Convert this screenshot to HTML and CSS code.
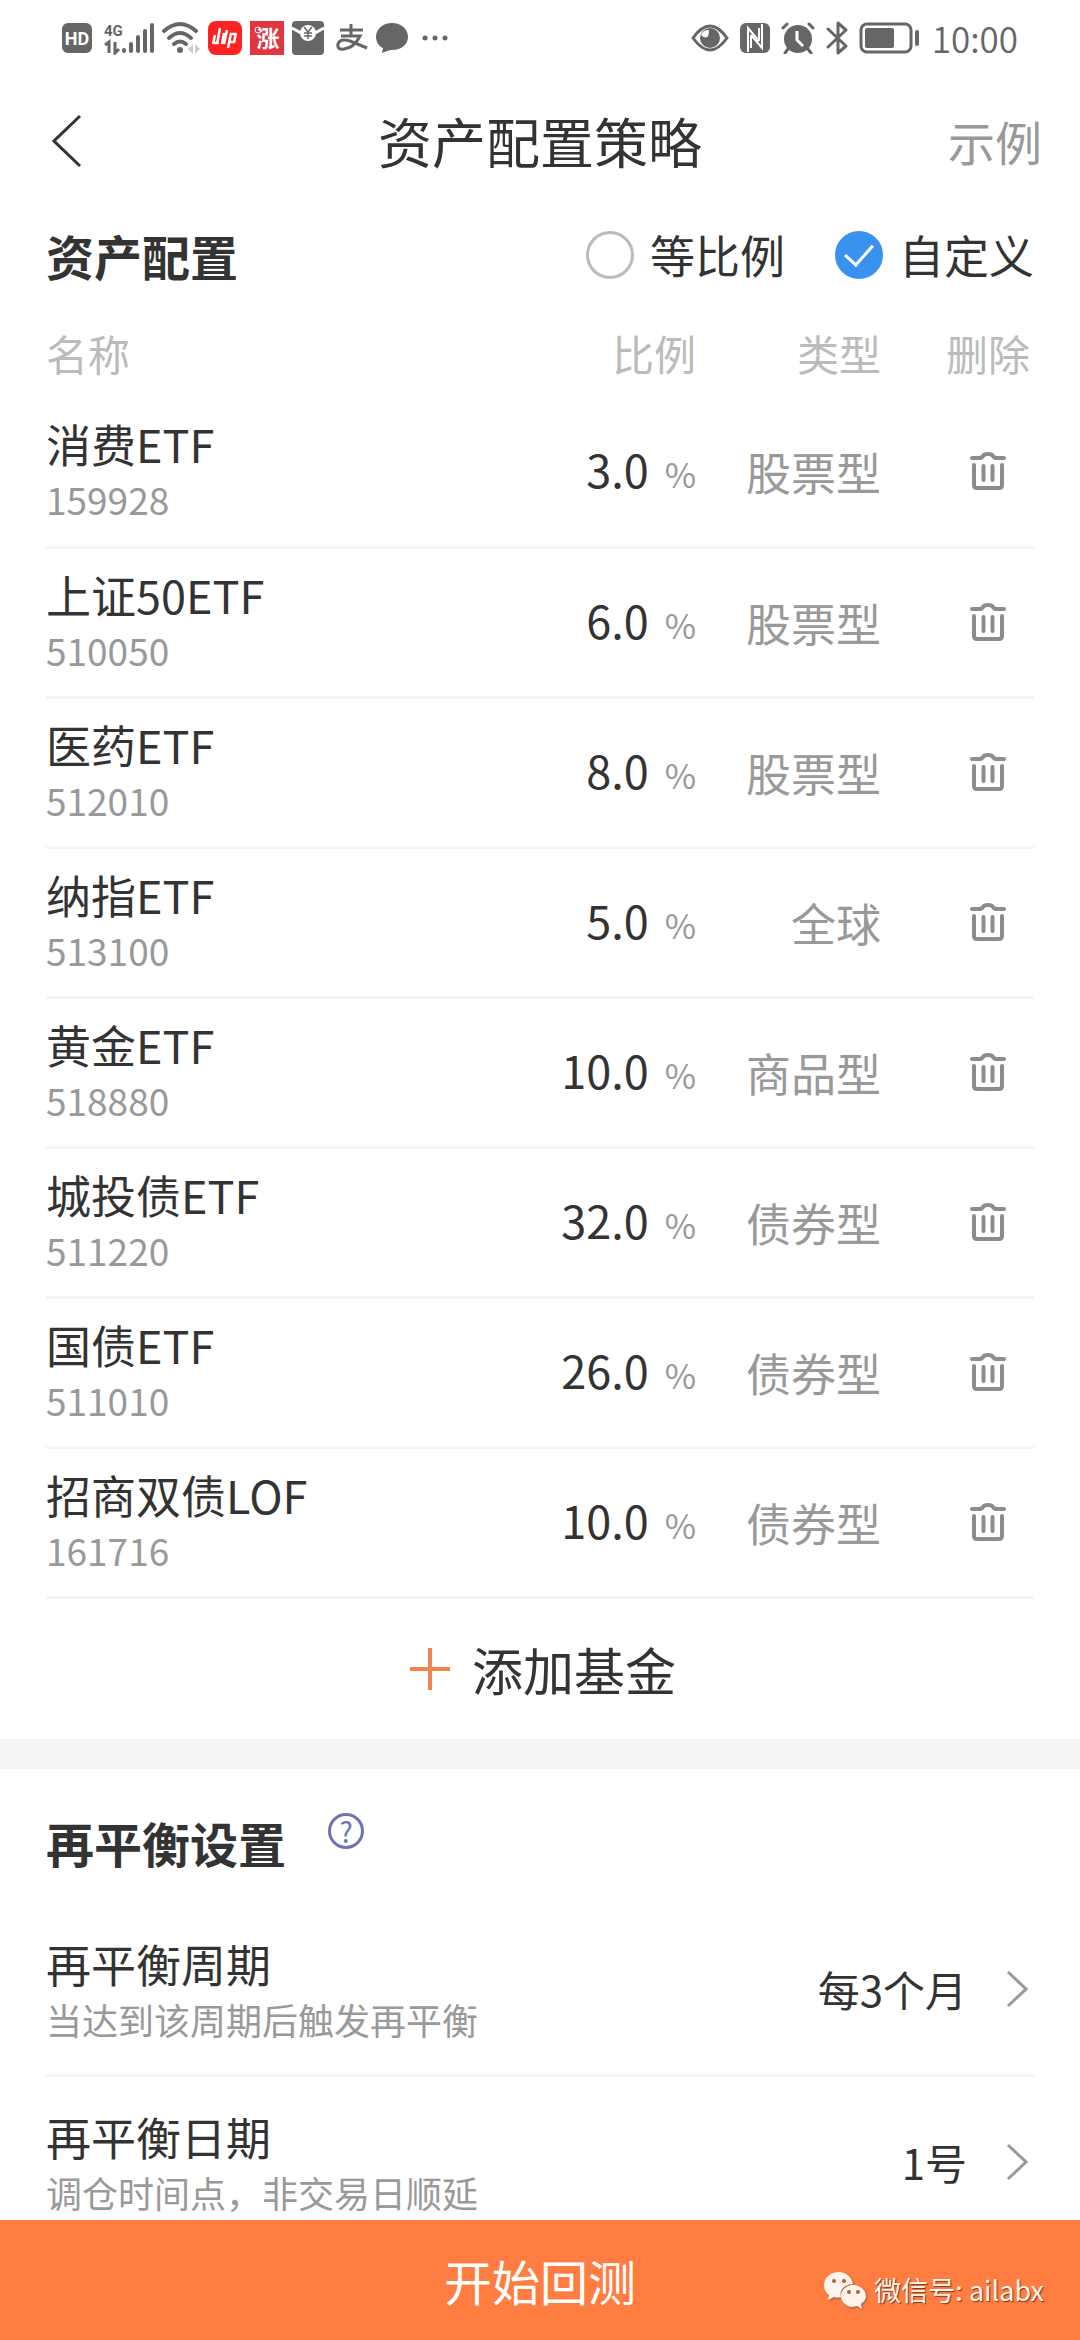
FILE: index.html
```html
<!DOCTYPE html>
<html lang="zh-CN">
<head>
<meta charset="utf-8">
<meta name="viewport" content="width=device-width, initial-scale=1">
<title>资产配置策略</title>
<link rel="stylesheet" href="styles.css">
</head>
<body>
<svg class="sprite" aria-hidden="true">
  <symbol id="trash" viewBox="0 0 36 38">
    <g fill="none" stroke="currentColor" stroke-width="4" stroke-linecap="round" stroke-linejoin="round">
      <path d="M2 6H9Q12 6 13 4Q14 2 18 2T23 4Q24 6 27 6H34"/>
      <path d="M4 13V33Q4 36 7 36H29Q32 36 32 33V13"/>
      <path d="M13.500 14V28M22.500 14V28"/>
    </g>
  </symbol>
  <symbol id="chevron" viewBox="0 0 22 38">
    <path d="M2 2L20 19L2 36" fill="none" stroke="currentColor" stroke-width="3"/>
  </symbol>
</svg>

<div class="status">
  <div class="status-left">
    <svg width="30" height="30" viewBox="0 0 30 30"><rect width="30" height="30" rx="6" fill="#666"/><text x="15" y="22" text-anchor="middle" class="t-hd">HD</text></svg>
    <svg class="gap-s" width="50" height="34" viewBox="0 0 50 34"><text x="0" y="15" class="t-4g">4G</text><path d="M1 24L5 21V32M11 21V32L15 28" fill="none" stroke="#666" stroke-width="3"/><path d="M20 29V30M27 23V30M34 16V30M41 10V30M48 4V30" stroke="#666" stroke-width="4" stroke-linecap="round"/></svg>
    <svg width="38" height="34" viewBox="0 0 38 34"><g fill="none" stroke="#666" stroke-width="4" stroke-linecap="round"><path d="M2 10Q18 -4 34 10"/><path d="M7 17Q18 7 29 17"/><path d="M12 23Q18 18 24 23"/></g><circle cx="18" cy="29" r="3" fill="#666"/><path d="M26 28L31 23V33ZM33 23V33L38 28Z" fill="#ccc"/></svg>
    <svg width="34" height="34" viewBox="0 0 34 34"><rect width="34" height="34" rx="8" fill="#f22"/><path d="M7 14L5 23M12 7L9 23M16 12L14 23M19 9L16 23M23 12L20 27M28 12L26 22M5 22H11M22 13H28M22 21H27" stroke="#fff" stroke-width="2.500" fill="none"/></svg>
    <svg width="34" height="34" viewBox="0 0 34 34"><rect width="34" height="34" fill="#e0363f"/><text x="18" y="26" text-anchor="middle" class="t-zhang">涨</text><circle cx="8" cy="9" r="3" fill="none" stroke="#fff"/></svg>
    <svg width="32" height="34" viewBox="0 0 32 34"><rect width="32" height="34" rx="4" fill="#666"/><path d="M0 7L9 12M32 7L23 12" stroke="#fff" stroke-width="3"/><circle cx="16" cy="12" r="8" fill="#fff"/><path d="M12 6L16 11L20 6M16 11V18M12 12H20M12 15H20" fill="none" stroke="#666" stroke-width="1.500"/></svg>
    <svg class="gap-s" width="32" height="28" viewBox="0 0 32 28"><path d="M4 6H27M15 0V12M5 12H24Q18 24 8 25Q1 26 2 20Q4 14 14 17L31 24" fill="none" stroke="#666" stroke-width="3"/></svg>
    <svg width="32" height="32" viewBox="0 0 32 32"><path d="M16 1C7 1 0 7 0 15C0 20 3 24 7 26L6 31L14 28C24 29 32 23 32 15C32 7 25 1 16 1Z" fill="#666"/></svg>
    <svg class="gap-d" width="26" height="6" viewBox="0 0 26 6"><g fill="#666"><circle cx="3" cy="3" r="2.500"/><circle cx="13" cy="3" r="2.500"/><circle cx="23" cy="3" r="2.500"/></g></svg>
  </div>
  <div class="status-right">
    <svg width="38" height="28" viewBox="0 0 38 28"><path d="M2 14Q19 -10 36 14Q19 38 2 14Z" fill="none" stroke="#666" stroke-width="3"/><circle cx="19" cy="14" r="10" fill="#666"/><path d="M10 11Q18 18 18 6Q12 6 10 11Z" fill="#fff"/></svg>
    <svg width="30" height="30" viewBox="0 0 30 30"><rect width="30" height="30" rx="6" fill="#666"/><path d="M8 29V5L19 18M11 12V25M22 1V25L11 12M19 5V18" fill="none" stroke="#fff" stroke-width="2"/></svg>
    <svg width="34" height="32" viewBox="0 0 34 32"><circle cx="17" cy="17" r="14" fill="#666"/><path d="M2 6L6 2M32 6L28 2M7 27L4 31M27 27L30 31" stroke="#666" stroke-width="3" stroke-linecap="round"/><path d="M16 9V18L22 24" fill="none" stroke="#fff" stroke-width="3"/></svg>
    <svg width="22" height="34" viewBox="0 0 22 34"><path d="M2 8L20 25L12 32V2L20 9L2 26" fill="none" stroke="#666" stroke-width="3" stroke-linejoin="round" stroke-linecap="round"/></svg>
    <svg width="62" height="32" viewBox="0 0 62 32"><rect x="2" y="2" width="50" height="28" rx="6" fill="none" stroke="#666" stroke-width="3"/><rect x="6" y="6" width="29" height="20" rx="2" fill="#666"/><path d="M58 10V22" stroke="#666" stroke-width="4" stroke-linecap="round"/></svg>
    <span class="clock">10:00</span>
  </div>
</div>

<header class="nav">
  <button class="back" type="button" aria-label="返回"><svg width="30" height="54" viewBox="0 0 30 54"><path d="M28 2L2 27L28 52" fill="none" stroke="currentColor" stroke-width="3"/></svg></button>
  <h1>资产配置策略</h1>
  <a class="example" href="#">示例</a>
</header>

<main>
  <section class="allocation">
    <div class="section-head">
      <h2>资产配置</h2>
      <div class="modes">
        <label><input type="radio" name="mode">等比例</label>
        <label><input type="radio" name="mode" checked>自定义</label>
      </div>
    </div>
    <table>
      <thead><tr><th class="name">名称</th><th class="ratio">比例</th><th class="type">类型</th><th class="del">删除</th></tr></thead>
      <tbody>
        <tr><td class="name"><b>消费ETF</b><small>159928</small></td><td class="ratio"><label><input type="text" value="3.0" aria-label="消费ETF 比例">%</label></td><td class="type">股票型</td><td class="del"><button type="button" aria-label="删除"><svg><use href="#trash"/></svg></button></td></tr>
        <tr><td class="name"><b>上证50ETF</b><small>510050</small></td><td class="ratio"><label><input type="text" value="6.0" aria-label="上证50ETF 比例">%</label></td><td class="type">股票型</td><td class="del"><button type="button" aria-label="删除"><svg><use href="#trash"/></svg></button></td></tr>
        <tr><td class="name"><b>医药ETF</b><small>512010</small></td><td class="ratio"><label><input type="text" value="8.0" aria-label="医药ETF 比例">%</label></td><td class="type">股票型</td><td class="del"><button type="button" aria-label="删除"><svg><use href="#trash"/></svg></button></td></tr>
        <tr><td class="name"><b>纳指ETF</b><small>513100</small></td><td class="ratio"><label><input type="text" value="5.0" aria-label="纳指ETF 比例">%</label></td><td class="type">全球</td><td class="del"><button type="button" aria-label="删除"><svg><use href="#trash"/></svg></button></td></tr>
        <tr><td class="name"><b>黄金ETF</b><small>518880</small></td><td class="ratio"><label><input type="text" value="10.0" aria-label="黄金ETF 比例">%</label></td><td class="type">商品型</td><td class="del"><button type="button" aria-label="删除"><svg><use href="#trash"/></svg></button></td></tr>
        <tr><td class="name"><b>城投债ETF</b><small>511220</small></td><td class="ratio"><label><input type="text" value="32.0" aria-label="城投债ETF 比例">%</label></td><td class="type">债券型</td><td class="del"><button type="button" aria-label="删除"><svg><use href="#trash"/></svg></button></td></tr>
        <tr><td class="name"><b>国债ETF</b><small>511010</small></td><td class="ratio"><label><input type="text" value="26.0" aria-label="国债ETF 比例">%</label></td><td class="type">债券型</td><td class="del"><button type="button" aria-label="删除"><svg><use href="#trash"/></svg></button></td></tr>
        <tr><td class="name"><b>招商双债LOF</b><small>161716</small></td><td class="ratio"><label><input type="text" value="10.0" aria-label="招商双债LOF 比例">%</label></td><td class="type">债券型</td><td class="del"><button type="button" aria-label="删除"><svg><use href="#trash"/></svg></button></td></tr>
      </tbody>
    </table>
    <button class="add" type="button"><svg width="40" height="42" viewBox="0 0 40 42"><path d="M20 0V42M0 21H40" stroke="#ee8450" stroke-width="4"/></svg>添加基金</button>
  </section>

  <section class="rebalance">
    <div class="rebalance-head">
      <h2>再平衡设置</h2>
      <button class="help" type="button" aria-label="帮助">?</button>
    </div>
    <a class="setting" href="#">
      <span class="label"><b>再平衡周期</b><small>当达到该周期后触发再平衡</small></span>
      <span class="value">每3个月</span>
      <svg class="go"><use href="#chevron"/></svg>
    </a>
    <a class="setting" href="#">
      <span class="label"><b>再平衡日期</b><small>调仓时间点，非交易日顺延</small></span>
      <span class="value">1号</span>
      <svg class="go"><use href="#chevron"/></svg>
    </a>
  </section>
</main>

<footer>
  <button class="start" type="button">开始回测</button>
  <div class="watermark">
    <svg width="42" height="37" viewBox="0 0 42 37">
      <path d="M15 0C6 0 0 6 0 13C0 18 2 21 5 23L4 28L10 25Q14 26 17 25C15 18 21 12 29 12C28 5 22 0 15 0Z" fill="#fff3ea"/>
      <path d="M29 13C22 13 17 18 17 24C17 30 22 35 29 35L33 34L38 37L37 32C40 30 42 27 42 24C42 18 36 13 29 13Z" fill="#fff3ea"/>
      <g fill="#b0603a"><circle cx="10" cy="9" r="2"/><circle cx="20" cy="9" r="2"/><circle cx="25" cy="20" r="2"/><circle cx="34" cy="20" r="2"/></g>
    </svg>
    <span>微信号: ailabx</span>
  </div>
</footer>
</body>
</html>
```

FILE: styles.css
```css
* { box-sizing: border-box; }

body {
  margin: 0;
  height: 100vh;
  display: flex;
  flex-direction: column;
  background: #fff;
  color: #333;
  font-family: "Noto Sans CJK SC", sans-serif;
  font-size: 45px;
}

button, input { font: inherit; color: inherit; }
button { border: 0; padding: 0; background: none; }
a { color: inherit; text-decoration: none; }
h1, h2 { margin: 0; }
b { font-weight: 400; }
svg { display: block; flex: none; }
.sprite { display: none; }

/* status bar */
.status {
  flex: none;
  display: flex;
  justify-content: space-between;
  align-items: center;
  height: 76px;
  padding: 0 62px;
  color: #666;
}
.status-left { display: flex; align-items: center; gap: 8px; }
.status-right { display: flex; align-items: center; gap: 11px; }
.gap-s { margin-left: 4px; }
.gap-d { margin-left: 6px; }
.clock { font-size: 35px; line-height: 40px; font-weight: 350; }
.t-hd { font: 700 18px "Roboto", sans-serif; fill: #fff; }
.t-4g { font: 700 15px "Roboto", sans-serif; fill: #666; }
.t-zhang { font: 700 23px "Noto Sans CJK SC", sans-serif; fill: #fff; }

/* title bar */
.nav {
  flex: none;
  display: grid;
  grid-template-columns: 1fr auto 1fr;
  align-items: center;
  height: 130px;
  padding: 0 38px;
}
.back { justify-self: start; padding-left: 14px; }
.nav h1 { font-size: 54px; line-height: 80px; font-weight: 400; }
.example { justify-self: end; font-size: 47px; line-height: 70px; color: #999; }

main { flex: 1; min-height: 0; overflow-y: auto; scrollbar-width: none; }

/* allocation table */
.allocation { padding: 0 46px; }
h2 { font-size: 48px; line-height: 70px; font-weight: 700; }
.section-head {
  display: flex;
  justify-content: space-between;
  align-items: center;
  height: 98px;
}
.modes { display: flex; gap: 50px; }
.modes label { display: flex; align-items: center; gap: 16px; line-height: 66px; }
.modes input {
  appearance: none;
  display: grid;
  place-items: center;
  width: 48px;
  height: 48px;
  margin: 0;
  border: 3px solid #bbb;
  border-radius: 50%;
}
.modes input:checked { background: #3a92f0; border-color: #3a92f0; }
.modes input:checked::after {
  content: "";
  width: 13px;
  height: 24px;
  margin-bottom: 8px;
  border: solid #fff;
  border-width: 0 3px 3px 0;
  transform: rotate(42deg);
}

table { width: 100%; border-collapse: collapse; table-layout: fixed; }
th { height: 93px; padding: 4px 0 0; font-size: 42px; font-weight: 400; line-height: 60px; color: #bbb; vertical-align: middle; }
td { height: 150px; padding: 0; border-bottom: 3px solid #f5f5f5; vertical-align: middle; }
.name { text-align: left; }
.ratio { width: 280px; text-align: right; }
.type { width: 185px; text-align: right; }
.del { width: 153px; padding-left: 61px; text-align: center; }
td b, .label b { display: block; line-height: 56px; }
td small { display: block; font-size: 37px; line-height: 54px; color: #999; }
td.type { color: #999; }
td.ratio { padding-bottom: 4px; }
td.ratio label { display: flex; align-items: baseline; justify-content: flex-end; gap: 16px; font-size: 34px; color: #999; }
td input {
  width: 140px;
  padding: 0;
  border: 0;
  outline: 0;
  background: none;
  text-align: right;
  font-size: 45px;
  line-height: 60px;
  color: #333;
}
.del button { color: #8c8c8c; }
.del svg { width: 36px; height: 38px; }
td.del button { display: block; margin: 0 auto; }

.add {
  display: flex;
  justify-content: center;
  align-items: center;
  gap: 22px;
  width: 100%;
  height: 140px;
  padding-left: 6px;
  font-size: 51px;
}

/* rebalance settings */
.rebalance { border-top: 30px solid #f5f5f5; padding: 0 46px; }
.rebalance-head { display: flex; align-items: flex-start; gap: 42px; padding: 38px 0 27px; }
.help {
  width: 36px;
  height: 36px;
  margin-top: 6px;
  border: 3px solid #6c73b4;
  border-radius: 50%;
  font-size: 28px;
  line-height: 28px;
  color: #6c73b4;
}
.setting { display: flex; align-items: center; height: 173px; border-bottom: 3px solid #f5f5f5; }
.label { flex: 1; padding-top: 4px; }
.label small { display: block; font-size: 36px; line-height: 54px; color: #999; }
.value { font-size: 42px; line-height: 60px; }
.go { width: 22px; height: 38px; margin: 0 6px 0 39px; color: #999; }

/* bottom action */
footer { flex: none; position: relative; background: #ff7d41; color: #fff; }
.start { display: block; width: 100%; height: 120px; font-size: 48px; }
.watermark {
  position: absolute;
  right: 36px;
  bottom: 30px;
  display: flex;
  align-items: center;
  gap: 8px;
  font-size: 27px;
  line-height: 40px;
  color: #fff3ea;
  text-shadow: 1px 1px 1px #6b3a20;
}
.watermark svg { filter: drop-shadow(1px 1px 1px #a05a35); }
```
